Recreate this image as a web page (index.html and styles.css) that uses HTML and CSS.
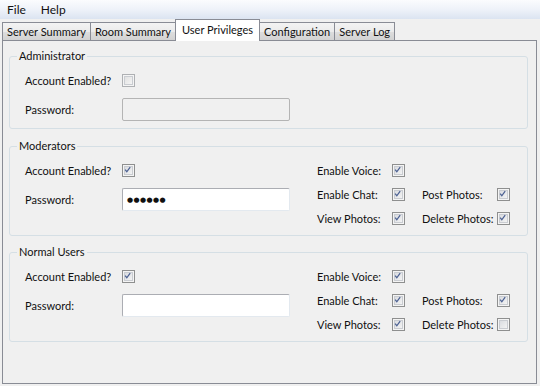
FILE: index.html
```html
<!DOCTYPE html>
<html>
<head>
<meta charset="utf-8">
<link rel="stylesheet" href="styles.css">
</head>
<body>
<div class="menubar">
  <span class="menu">File</span>
  <span class="menu">Help</span>
</div>
<div class="tabs">
  <div class="tab first">Server Summary</div>
  <div class="tab">Room Summary</div>
  <div class="tab active">User Privileges</div>
  <div class="tab">Configuration</div>
  <div class="tab">Server Log</div>
</div>
<div class="panel">
  <fieldset class="group admin">
    <legend>Administrator</legend>
    <div class="cols">
      <div class="left">
        <div class="row"><span class="lbl">Account Enabled?</span><span class="cb disabled"></span></div>
        <div class="row"><span class="lbl">Password:</span><span class="input disabled"></span></div>
      </div>
    </div>
  </fieldset>

  <fieldset class="group">
    <legend>Moderators</legend>
    <div class="cols">
      <div class="left">
        <div class="row"><span class="lbl">Account Enabled?</span><span class="cb"><svg viewBox="0 0 13 13"><path d="M3.5 6.5 L5.5 9 L9.5 3.5" /></svg></span></div>
        <div class="row"><span class="lbl">Password:</span><span class="input"><span class="dots">●●●●●●</span></span></div>
      </div>
      <div class="right">
        <span class="lbl">Enable Voice:</span><span class="cb"><svg viewBox="0 0 13 13"><path d="M3.5 6.5 L5.5 9 L9.5 3.5" /></svg></span><span></span><span></span>
        <span class="lbl">Enable Chat:</span><span class="cb"><svg viewBox="0 0 13 13"><path d="M3.5 6.5 L5.5 9 L9.5 3.5" /></svg></span><span class="lbl">Post Photos:</span><span class="cb"><svg viewBox="0 0 13 13"><path d="M3.5 6.5 L5.5 9 L9.5 3.5" /></svg></span>
        <span class="lbl">View Photos:</span><span class="cb"><svg viewBox="0 0 13 13"><path d="M3.5 6.5 L5.5 9 L9.5 3.5" /></svg></span><span class="lbl">Delete Photos:</span><span class="cb"><svg viewBox="0 0 13 13"><path d="M3.5 6.5 L5.5 9 L9.5 3.5" /></svg></span>
      </div>
    </div>
  </fieldset>

  <fieldset class="group">
    <legend>Normal Users</legend>
    <div class="cols">
      <div class="left">
        <div class="row"><span class="lbl">Account Enabled?</span><span class="cb"><svg viewBox="0 0 13 13"><path d="M3.5 6.5 L5.5 9 L9.5 3.5" /></svg></span></div>
        <div class="row"><span class="lbl">Password:</span><span class="input"></span></div>
      </div>
      <div class="right">
        <span class="lbl">Enable Voice:</span><span class="cb"><svg viewBox="0 0 13 13"><path d="M3.5 6.5 L5.5 9 L9.5 3.5" /></svg></span><span></span><span></span>
        <span class="lbl">Enable Chat:</span><span class="cb"><svg viewBox="0 0 13 13"><path d="M3.5 6.5 L5.5 9 L9.5 3.5" /></svg></span><span class="lbl">Post Photos:</span><span class="cb"><svg viewBox="0 0 13 13"><path d="M3.5 6.5 L5.5 9 L9.5 3.5" /></svg></span>
        <span class="lbl">View Photos:</span><span class="cb"><svg viewBox="0 0 13 13"><path d="M3.5 6.5 L5.5 9 L9.5 3.5" /></svg></span><span class="lbl">Delete Photos:</span><span class="cb"></span>
      </div>
    </div>
  </fieldset>
</div>
</body>
</html>
```

FILE: styles.css
```css
* { box-sizing: border-box; }
html, body {
  margin: 0;
  padding: 0;
  background: #f0f0f0;
  font-family: Lato, "Liberation Sans", sans-serif;
  font-size: 11px;
  color: #111;
}
.menubar {
  height: 19px;
  display: flex;
  align-items: center;
  padding-left: 7px;
  gap: 15px;
  background: linear-gradient(#fbfcfe, #eef2f9 50%, #dbe4f1);
  font-size: 12px;
}
.tabs {
  display: flex;
  align-items: flex-end;
  height: 21px;
  padding-left: 2px;
  background: #f0f0f0;
}
.tab {
  height: 18px;
  padding: 0 4px;
  display: flex;
  align-items: center;
  border: 1px solid #898c95;
  border-bottom: none;
  margin-left: -1px;
  background: linear-gradient(#f3f3f3, #ebebeb 50%, #dedede 51%, #d2d2d2);
  white-space: nowrap;
}
.tab.first { margin-left: 0; }
.tab.active {
  height: 22px;
  margin-bottom: -1px;
  padding: 0 6px 3px;
  background: #fff;
  position: relative;
  z-index: 1;
}
.panel {
  margin: 0 3px 0 2px;
  height: 344px;
  border: 1px solid #898c95;
  background: #f0f0f0;
  padding-top: 8px;
}
.group {
  margin: 0 8px 9px 6px;
  padding: 0 15px 6px;
  border: 1px solid #d5dfe5;
  border-radius: 3px;
  min-width: 0;
}
.group.admin {
  padding-bottom: 7px;
  margin-bottom: 10px;
}
.group legend {
  padding: 0 2px;
  margin-left: -8px;
  line-height: 14px;
  height: 14px;
}
.cols {
  display: flex;
  padding-top: 6px;
}
.left {
  width: 265px;
  display: grid;
  grid-template-rows: 22px 23px;
  row-gap: 7px;
}
.row {
  display: flex;
  align-items: center;
}
.row .lbl { width: 97px; }
.right {
  margin-left: 27px;
  display: grid;
  grid-template-columns: 75px 30px 75px 13px;
  grid-auto-rows: 22px;
  row-gap: 2px;
  align-items: center;
}
.lbl { white-space: nowrap; }
.cb {
  width: 13px;
  height: 13px;
  border: 1px solid #8e8f8f;
  background: linear-gradient(135deg, #d3d6db, #f4f4f4 85%);
  box-shadow: inset 0 0 0 1px #f4f4f4, inset 0 0 0 2px #c9ccd1;
  display: flex;
}
.cb svg {
  width: 11px;
  height: 11px;
}
.cb svg path {
  fill: none;
  stroke: #4d6293;
  stroke-width: 1.5;
  transform: translate(-1px, -1px);
}
.cb.disabled {
  border-color: #aeb0b3;
  background: linear-gradient(135deg, #dcdcdc, #f5f5f5 85%);
}
.input {
  width: 168px;
  height: 23px;
  background: #fff;
  border: 1px solid #abadb3;
  border-color: #abadb3 #e3e9ef #e3e9ef #abadb3;
  border-radius: 2px;
  display: flex;
  align-items: center;
  padding-left: 4px;
}
.input.disabled {
  background: #f0f0f0;
  border: 1px solid #b4b4b4;
}
.dots {
  font-family: "DejaVu Sans", sans-serif;
  font-size: 7px;
  letter-spacing: 0.4px;
}
```
